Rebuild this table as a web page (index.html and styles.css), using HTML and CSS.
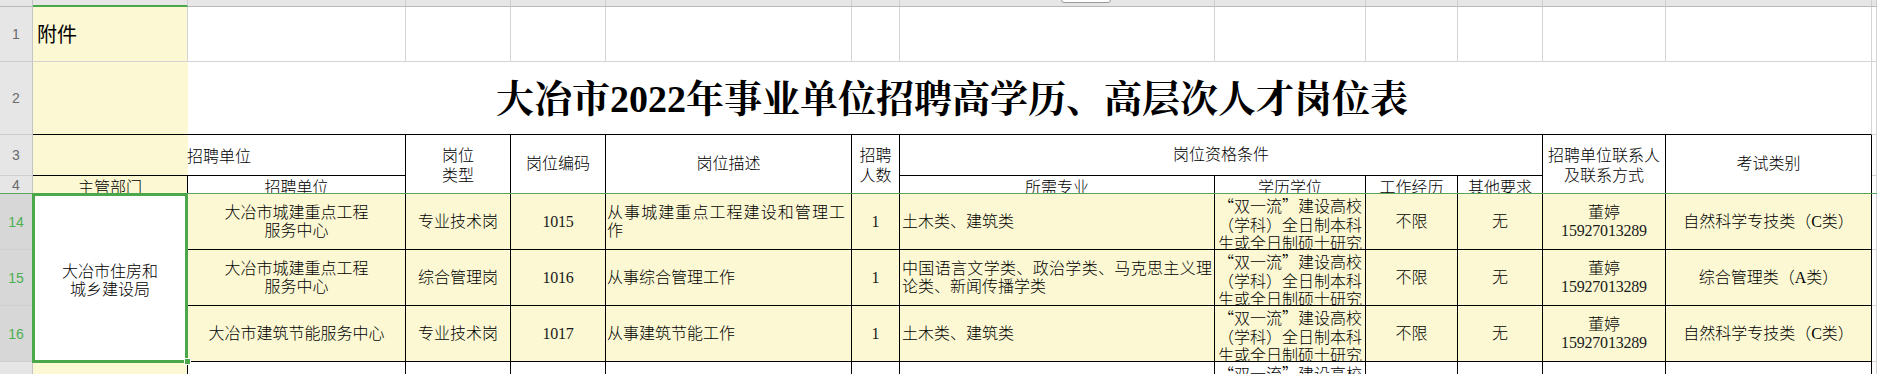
FILE: index.html
```html
<!DOCTYPE html>
<html lang="zh-CN">
<head>
<meta charset="utf-8">
<title>大冶市2022年事业单位招聘高学历、高层次人才岗位表</title>
<link rel="stylesheet" href="styles.css">
</head>
<body>
<div class="sheet">
  <!-- column header strip -->
  <div class="ch corner"></div>
  <div class="ch sel"><span>A</span></div>
  <div class="ch"><span>B</span></div>
  <div class="ch"><span>C</span></div>
  <div class="ch"><span>D</span></div>
  <div class="ch"><span>E</span></div>
  <div class="ch"><span>F</span></div>
  <div class="ch"><span>G</span></div>
  <div class="ch"><span>H</span></div>
  <div class="ch"><span>I</span></div>
  <div class="ch"><span>J</span></div>
  <div class="ch"><span>K</span></div>
  <div class="ch"><span>L</span></div>
  <div class="ch"><span>M</span></div>

  <!-- row 1 -->
  <div class="rh">1</div>
  <div class="c light hl left attach">附件</div>
  <div class="c light"></div>
  <div class="c light"></div>
  <div class="c light"></div>
  <div class="c light"></div>
  <div class="c light"></div>
  <div class="c light"></div>
  <div class="c light"></div>
  <div class="c light"></div>
  <div class="c light"></div>
  <div class="c light"></div>
  <div class="c light"></div>
  <div class="c light"></div>

  <!-- row 2 -->
  <div class="rh">2</div>
  <div class="c title span12">大冶市2022年事业单位招聘高学历、高层次人才岗位表</div>
  <div class="c light"></div>

  <!-- row 3 -->
  <div class="rh">3</div>
  <div class="c span2 splitA">招聘单位</div>
  <div class="c rs2 hd2">岗位<br>类型</div>
  <div class="c rs2">岗位编码</div>
  <div class="c rs2">岗位描述</div>
  <div class="c rs2 hd2">招聘<br>人数</div>
  <div class="c span4">岗位资格条件</div>
  <div class="c rs2 hd2">招聘单位联系人<br>及联系方式</div>
  <div class="c rs2">考试类别</div>
  <div class="c light"></div>

  <!-- row 4 -->
  <div class="rh">4</div>
  <div class="c hl r4">主管部门</div>
  <div class="c r4">招聘单位</div>
  <div class="c r4">所需专业</div>
  <div class="c r4">学历学位</div>
  <div class="c r4">工作经历</div>
  <div class="c r4">其他要求</div>
  <div class="c light"></div>

  <!-- row 14 -->
  <div class="rh sel">14</div>
  <div class="c rs3">大冶市住房和<br>城乡建设局</div>
  <div class="c hl">大冶市城建重点工程<br>服务中心</div>
  <div class="c hl">专业技术岗</div>
  <div class="c hl num">1015</div>
  <div class="c hl left desc"><div class="txt"><span class="jl">从事城建重点工程建设和管理工</span><span class="ln">作</span></div></div>
  <div class="c hl num">1</div>
  <div class="c hl left"><div class="txt">土木类、建筑类</div></div>
  <div class="c hl left top"><div class="txt edu"><span class="q">“</span>双一流<span class="q">”</span>建设高校<br>（学科）全日制本科<br>生或全日制硕士研究</div></div>
  <div class="c hl">不限</div>
  <div class="c hl">无</div>
  <div class="c hl"><div>董婷<br><span class="num">15927013289</span></div></div>
  <div class="c hl">自然科学专技类（C类）</div>
  <div class="c light"></div>

  <!-- row 15 -->
  <div class="rh sel">15</div>
  <div class="c hl">大冶市城建重点工程<br>服务中心</div>
  <div class="c hl">综合管理岗</div>
  <div class="c hl num">1016</div>
  <div class="c hl left desc"><div class="txt">从事综合管理工作</div></div>
  <div class="c hl num">1</div>
  <div class="c hl left"><div class="txt"><span class="jl">中国语言文学类、政治学类、马克思主义理</span><span class="ln">论类、新闻传播学类</span></div></div>
  <div class="c hl left top"><div class="txt edu"><span class="q">“</span>双一流<span class="q">”</span>建设高校<br>（学科）全日制本科<br>生或全日制硕士研究</div></div>
  <div class="c hl">不限</div>
  <div class="c hl">无</div>
  <div class="c hl"><div>董婷<br><span class="num">15927013289</span></div></div>
  <div class="c hl">综合管理类（A类）</div>
  <div class="c light"></div>

  <!-- row 16 -->
  <div class="rh sel">16</div>
  <div class="c hl">大冶市建筑节能服务中心</div>
  <div class="c hl">专业技术岗</div>
  <div class="c hl num">1017</div>
  <div class="c hl left desc"><div class="txt">从事建筑节能工作</div></div>
  <div class="c hl num">1</div>
  <div class="c hl left"><div class="txt">土木类、建筑类</div></div>
  <div class="c hl left top"><div class="txt edu"><span class="q">“</span>双一流<span class="q">”</span>建设高校<br>（学科）全日制本科<br>生或全日制硕士研究</div></div>
  <div class="c hl">不限</div>
  <div class="c hl">无</div>
  <div class="c hl"><div>董婷<br><span class="num">15927013289</span></div></div>
  <div class="c hl">自然科学专技类（C类）</div>
  <div class="c light"></div>

  <!-- row 17 -->
  <div class="rh">17</div>
  <div class="c hl"></div>
  <div class="c"></div>
  <div class="c"></div>
  <div class="c"></div>
  <div class="c"></div>
  <div class="c"></div>
  <div class="c"></div>
  <div class="c left top"><div class="txt edu"><span class="q">“</span>双一流<span class="q">”</span>建设高校</div></div>
  <div class="c"></div>
  <div class="c"></div>
  <div class="c"></div>
  <div class="c"></div>
  <div class="c light"></div>

  <!-- overlays -->
  <div class="freeze"></div>
  <div class="selection"></div>
  <div class="handle"></div>
  <div class="tab"></div>
</div>
</body>
</html>
```

FILE: styles.css
```css
* { box-sizing: border-box; }
html, body { margin: 0; padding: 0; }
body {
  width: 1877px;
  height: 374px;
  overflow: hidden;
  background: #fff;
  color: #000;
  font-family: "Liberation Serif", "Noto Sans CJK SC", serif;
  font-size: 16px;
  font-weight: 300;
}
.sheet {
  position: relative;
  display: grid;
  grid-template-columns: 33px 155px 218px 105px 95px 246px 48px 315px 151px 92px 85px 123px 206px 5px;
  grid-template-rows: 7px 55px 73px 41px 18px 56px 56px 56px 56px;
}

/* column header strip */
.ch {
  background: #e6e6e6;
  border-right: 1px solid #cdcdcd;
  border-bottom: 1px solid #b9b9b9;
  display: flex;
  justify-content: center;
  align-items: flex-end;
  overflow: hidden;
  font-family: "Liberation Sans", sans-serif;
  font-size: 13px;
  font-weight: 400;
  color: #555;
}
.ch span { line-height: 13px; margin-bottom: 4px; }
.ch.sel { border-bottom: 2px solid #4aa84a; color: #4aa84a; }
.ch.corner { border-right-color: #c4c4c4; }

/* row headers */
.rh {
  background: #e6e6e6;
  border-right: 1px solid #c4c4c4;
  border-bottom: 1px solid #cfcfcf;
  display: flex;
  align-items: center;
  justify-content: center;
  font-family: "Liberation Sans", sans-serif;
  font-size: 14px;
  font-weight: 400;
  color: #6a6a6a;
}
.rh.sel { background: #d7d7d7; color: #4caf50; }

/* cells */
.c {
  display: flex;
  align-items: center;
  justify-content: center;
  text-align: center;
  overflow: hidden;
  border-right: 1px solid #000;
  border-bottom: 1px solid #000;
  line-height: 18px;
  white-space: nowrap;
}
.c.light { border-right-color: #d4d4d4; border-bottom-color: #d4d4d4; }
.hl { background: #fbf8d3; }
.left { justify-content: flex-start; text-align: left; padding-left: 2px; padding-right: 2px; }
.top { align-items: flex-start; padding-top: 2px; }
.txt { width: 100%; }
.jl { display: block; text-align: justify; text-align-last: justify; }
.ln { display: block; }
.desc { padding-left: 1px; padding-right: 6px; }
.edu { line-height: 18.5px; padding-left: 1px; }
.q { font-family: "Noto Sans CJK SC", sans-serif; }
.num { color: #1a1a1a; letter-spacing: -0.2px; }

.attach {
  font-family: "Noto Sans CJK SC", sans-serif;
  font-size: 20px;
  font-weight: 400;
  padding-left: 4px;
  align-items: center;
}

.title {
  border-right-color: #d4d4d4;
  background: linear-gradient(to right, #fbf8d3 0, #fbf8d3 155px, #fff 155px);
  font-family: "Liberation Serif", "Noto Serif CJK SC", "Noto Sans CJK SC", serif;
  font-size: 38px;
  font-weight: 700;
  padding-top: 2px;
}

.span12 { grid-column: span 12; }
.span2 { grid-column: span 2; }
.span4 { grid-column: span 4; }
.rs2 { grid-row: span 2; }
.rs3 { grid-row: span 3; padding-top: 6px; background: #fff; }

.splitA { background: linear-gradient(to right, #fbf8d3 0, #fbf8d3 155px, #fff 155px); padding-top: 3px; }
.hd2 { line-height: 20px; padding-top: 4px; }
.r4 { align-items: flex-start; padding-top: 3px; }

/* overlays */
.freeze {
  position: absolute;
  left: 0;
  top: 193px;
  width: 1877px;
  height: 1px;
  background: #5aa55a;
}
.selection {
  position: absolute;
  left: 32px;
  top: 193px;
  width: 156px;
  height: 170px;
  border: 3px solid #4aa84a;
}
.handle {
  position: absolute;
  left: 184px;
  top: 358px;
  width: 7px;
  height: 7px;
  background: #4aa84a;
  border: 1px solid #fff;
}
.tab {
  position: absolute;
  left: 1061px;
  top: -4px;
  width: 50px;
  height: 7px;
  border: 1px solid #9a9a9a;
  border-radius: 3px;
  background: #fff;
}
```
